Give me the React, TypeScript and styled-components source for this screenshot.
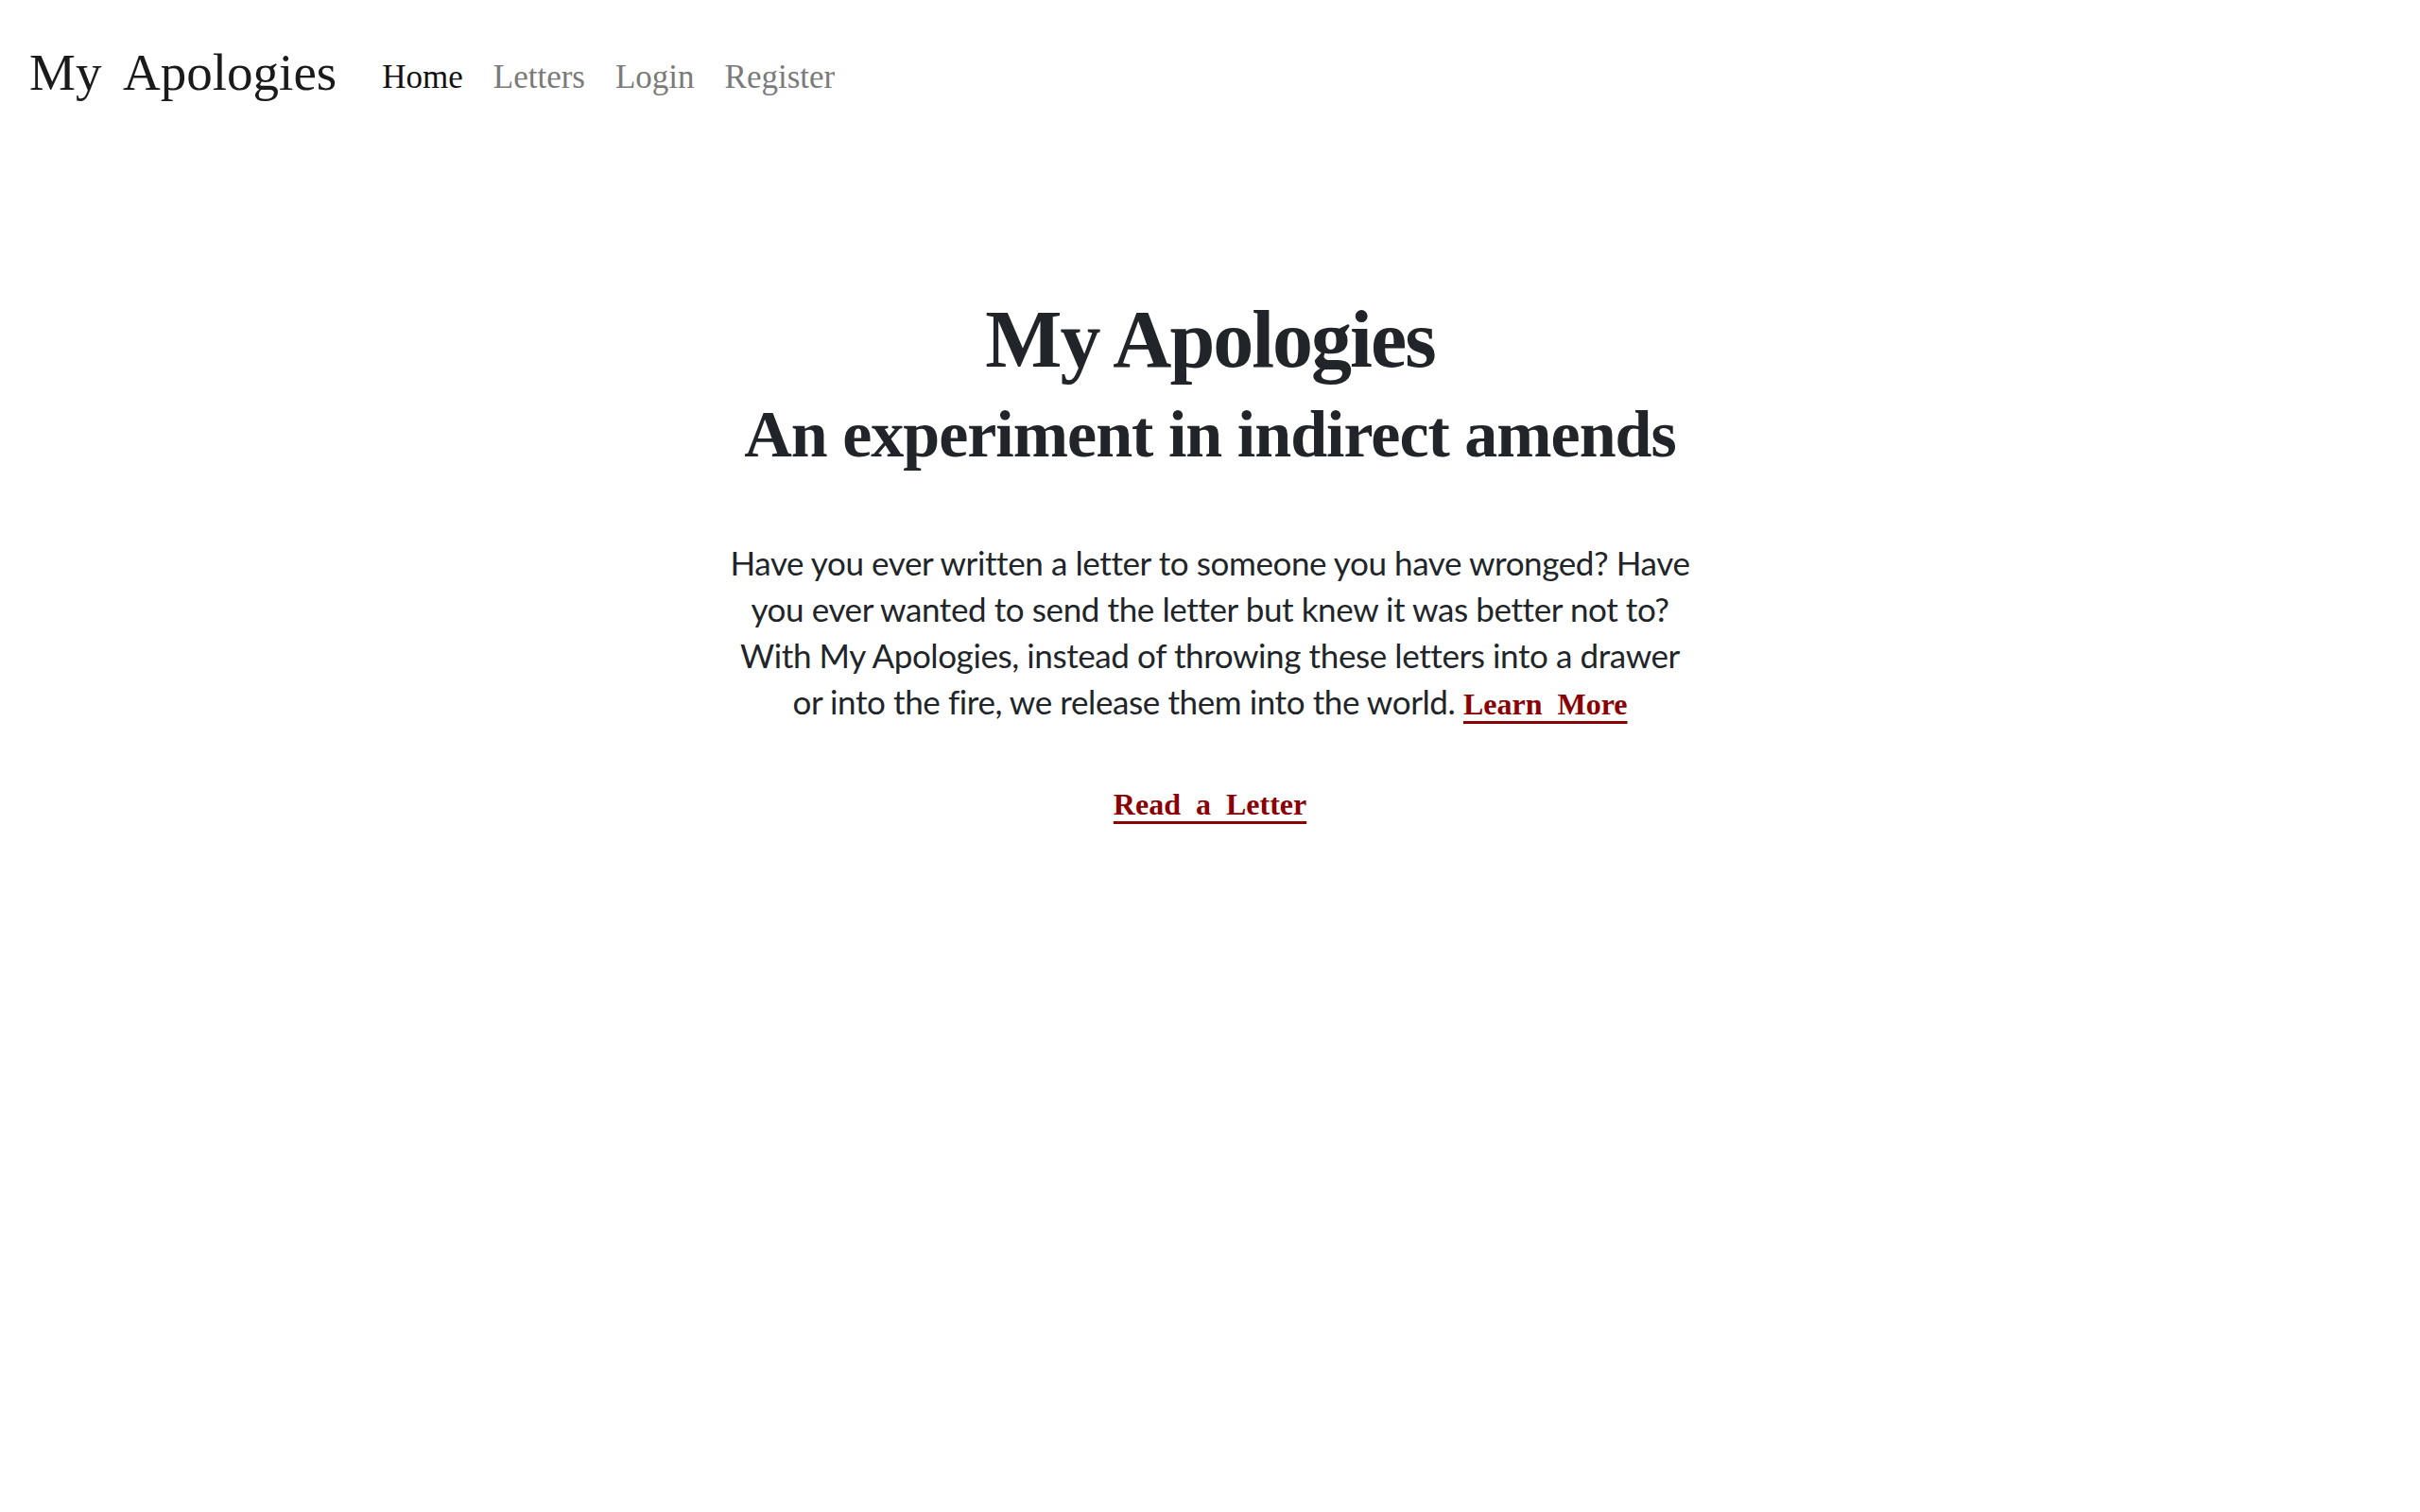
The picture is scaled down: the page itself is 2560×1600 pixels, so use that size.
import React from "react";
import styled, { createGlobalStyle } from "styled-components";

const GlobalStyle = createGlobalStyle`
  html, body {
    margin: 0;
    padding: 0;
    background: #fff;
  }
  body {
    font-family: "Lato", "Liberation Sans", sans-serif;
    color: #212529;
  }
`;

const serif = `"Liberation Serif", "DejaVu Serif", serif`;

const Page = styled.div`
  min-height: 1600px;
  display: flex;
  flex-direction: column;
`;

const Navbar = styled.nav`
  display: flex;
  align-items: center;
  padding: 45px 31px 22px;
  font-family: ${serif};
`;

const Brand = styled.a`
  font-size: 55px;
  color: #1a1a1a;
  word-spacing: 12px;
  margin-right: 32px;
  text-decoration: none;
`;

const NavList = styled.ul`
  display: flex;
  list-style: none;
  margin: 0;
  padding: 0;
  padding-top: 10px;
`;

const NavLink = styled.a<{ active?: boolean }>`
  display: block;
  padding: 0 16px;
  font-size: 35px;
  color: ${(p) => (p.active ? "#111" : "#7a7a7a")};
  text-decoration: none;
`;

const Main = styled.main`
  display: flex;
  flex-direction: column;
  align-items: center;
  padding-top: 178px;
`;

const Title = styled.h1`
  margin: 0;
  font-family: ${serif};
  font-weight: 700;
  font-size: 86px;
  line-height: 1.2;
  letter-spacing: -2px;
  color: #212529;
`;

const Subtitle = styled.h2`
  margin: 7px 0 0;
  font-family: ${serif};
  font-weight: 700;
  font-size: 70px;
  line-height: 1.2;
  letter-spacing: -1px;
  color: #212529;
`;

const Lead = styled.p`
  margin: 69px 0 0;
  max-width: 1024px;
  text-align: center;
  font-size: 35px;
  letter-spacing: -0.4px;
  line-height: 49px;
  color: #212529;
`;

const RedLink = styled.a`
  font-family: ${serif};
  font-weight: 700;
  font-size: 32px;
  letter-spacing: 0;
  color: #8b0000;
  text-decoration: underline;
  text-decoration-thickness: 3px;
  text-underline-offset: 7px;
  word-spacing: 8px;
`;

const ReadLink = styled(RedLink)`
  margin-top: 63px;
`;

export default function App() {
  return (
    <Page>
      <GlobalStyle />
      <Navbar>
        <Brand href="#">My Apologies</Brand>
        <NavList>
          <li>
            <NavLink href="#" active>
              Home
            </NavLink>
          </li>
          <li>
            <NavLink href="#">Letters</NavLink>
          </li>
          <li>
            <NavLink href="#">Login</NavLink>
          </li>
          <li>
            <NavLink href="#">Register</NavLink>
          </li>
        </NavList>
      </Navbar>
      <Main>
        <Title>My Apologies</Title>
        <Subtitle>An experiment in indirect amends</Subtitle>
        <Lead>
          Have you ever written a letter to someone you have wronged? Have you
          ever wanted to send the letter but knew it was better not to? With My
          Apologies, instead of throwing these letters into a drawer or into the
          fire, we release them into the world. <RedLink href="#">Learn More</RedLink>
        </Lead>
        <ReadLink href="#">Read a Letter</ReadLink>
      </Main>
    </Page>
  );
}
